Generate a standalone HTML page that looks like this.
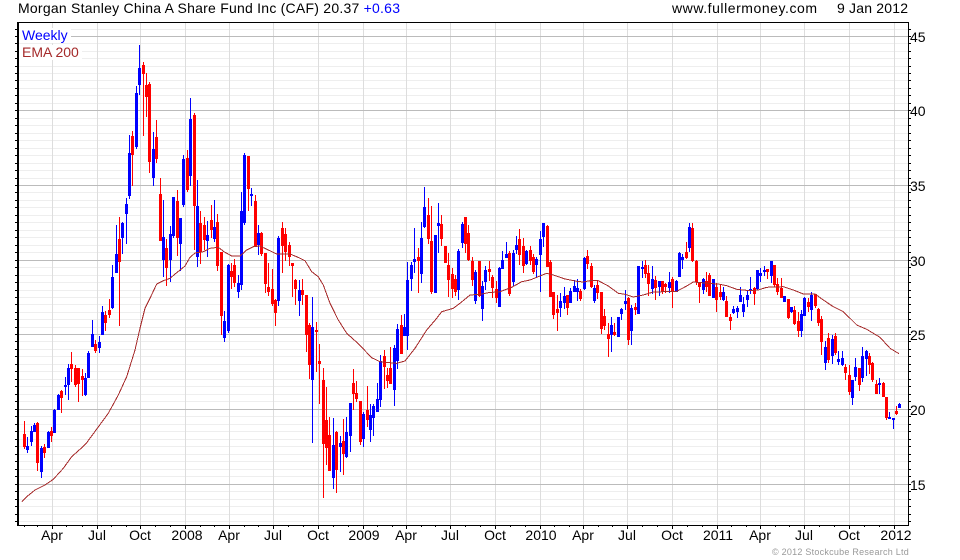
<!DOCTYPE html>
<html><head><meta charset="utf-8"><style>
html,body{margin:0;padding:0;background:#fff}
svg{display:block}
text{font-family:"Liberation Sans",Arial,sans-serif;font-size:14px;fill:#000}
.x{text-anchor:middle}
</style></head><body>
<svg width="960" height="560" viewBox="0 0 960 560" xmlns="http://www.w3.org/2000/svg">
<rect width="960" height="560" fill="#fff"/>
<g shape-rendering="crispEdges" fill="none">
<path stroke="#eee" d="M19 29.5h889M19 43.5h889M19 51.5h889M19 58.5h889M19 66.5h889M19 73.5h889M19 80.5h889M19 88.5h889M19 95.5h889M19 103.5h889M19 118.5h889M19 125.5h889M19 133.5h889M19 140.5h889M19 148.5h889M19 155.5h889M19 163.5h889M19 170.5h889M19 178.5h889M19 192.5h889M19 200.5h889M19 207.5h889M19 215.5h889M19 222.5h889M19 230.5h889M19 237.5h889M19 245.5h889M19 252.5h889M19 267.5h889M19 275.5h889M19 282.5h889M19 290.5h889M19 297.5h889M19 304.5h889M19 312.5h889M19 319.5h889M19 327.5h889M19 341.5h889M19 349.5h889M19 356.5h889M19 364.5h889M19 371.5h889M19 379.5h889M19 386.5h889M19 394.5h889M19 401.5h889M19 416.5h889M19 424.5h889M19 431.5h889M19 439.5h889M19 446.5h889M19 454.5h889M19 461.5h889M19 469.5h889M19 476.5h889M19 491.5h889M19 499.5h889M19 506.5h889M19 514.5h889M19 521.5h889"/>
<path stroke="#ddd" d="M52.5 23V525M97.5 23V525M140.5 23V525M185.5 23V525M229.5 23V525M273.5 23V525M318.5 23V525M363.5 23V525M406.5 23V525M450.5 23V525M495.5 23V525M540.5 23V525M583.5 23V525M627.5 23V525M672.5 23V525M717.5 23V525M760.5 23V525M804.5 23V525M849.5 23V525M894.5 23V525"/>
<path stroke="#bbb" d="M19 36.5h889M19 110.5h889M19 185.5h889M19 260.5h889M19 334.5h889M19 409.5h889M19 484.5h889"/>
<rect x="19" y="28" width="52" height="15" fill="#fff"/>
<rect x="19" y="45" width="63" height="15" fill="#fff"/>
<g stroke="#000">
<path d="M18 22.5H908.5V525.5H18"/>
<path stroke-width="2" d="M18 22V526"/>
<path id="t" d="M15 29.5h2M15 36.5h2M15 43.5h2M15 51.5h2M15 58.5h2M15 66.5h2M15 73.5h2M15 80.5h2M15 88.5h2M15 95.5h2M15 103.5h2M15 110.5h2M15 118.5h2M15 125.5h2M15 133.5h2M15 140.5h2M15 148.5h2M15 155.5h2M15 163.5h2M15 170.5h2M15 178.5h2M15 185.5h2M15 192.5h2M15 200.5h2M15 207.5h2M15 215.5h2M15 222.5h2M15 230.5h2M15 237.5h2M15 245.5h2M15 252.5h2M15 260.5h2M15 267.5h2M15 275.5h2M15 282.5h2M15 290.5h2M15 297.5h2M15 304.5h2M15 312.5h2M15 319.5h2M15 327.5h2M15 334.5h2M15 341.5h2M15 349.5h2M15 356.5h2M15 364.5h2M15 371.5h2M15 379.5h2M15 386.5h2M15 394.5h2M15 401.5h2M15 409.5h2M15 416.5h2M15 424.5h2M15 431.5h2M15 439.5h2M15 446.5h2M15 454.5h2M15 461.5h2M15 469.5h2M15 476.5h2M15 484.5h2M15 491.5h2M15 499.5h2M15 506.5h2M15 514.5h2M15 521.5h2"/>
<use href="#t" x="894"/>
<path d="M24.5 526v1M37.5 526v1M52.5 526v3M66.5 526v1M82.5 526v1M97.5 526v3M111.5 526v1M126.5 526v1M140.5 526v3M155.5 526v1M170.5 526v1M185.5 526v3M200.5 526v1M214.5 526v1M229.5 526v3M244.5 526v1M258.5 526v1M273.5 526v3M288.5 526v1M303.5 526v1M318.5 526v3M333.5 526v1M348.5 526v1M363.5 526v3M377.5 526v1M392.5 526v1M406.5 526v3M421.5 526v1M435.5 526v1M450.5 526v3M465.5 526v1M480.5 526v1M495.5 526v3M510.5 526v1M525.5 526v1M540.5 526v3M554.5 526v1M569.5 526v1M583.5 526v3M598.5 526v1M612.5 526v1M627.5 526v3M642.5 526v1M657.5 526v1M672.5 526v3M687.5 526v1M702.5 526v1M717.5 526v3M731.5 526v1M746.5 526v1M760.5 526v3M775.5 526v1M789.5 526v1M804.5 526v3M819.5 526v1M834.5 526v1M849.5 526v3M864.5 526v1M879.5 526v1M894.5 526v3"/>
</g>
<g stroke="#00f">
<path d="M27.5 437V453M31.5 426V446M34.5 423V432M41.5 446V478M48.5 431V448M54.5 409V433M58.5 394V410M65.5 377V395M68.5 364V400M85.5 373V396M88.5 351V378M92.5 320V347M99.5 336V353M102.5 306V335M112.5 265V309M116.5 225V273M122.5 222V254M126.5 198V244M129.5 135V199M136.5 86V149M139.5 45V95M153.5 132V186M163.5 200V277M170.5 226V282M173.5 197V238M180.5 218V271M183.5 155V207M190.5 98V186M197.5 180V267M207.5 221V257M214.5 200V242M224.5 311V342M228.5 264V333M238.5 275V298M241.5 192V290M244.5 153V225M251.5 188V206M258.5 225V255M278.5 236V306M299.5 280V316M312.5 297V443M333.5 418V489M340.5 436V472M346.5 417V458M350.5 403V452M363.5 412V447M370.5 404V442M373.5 404V436M377.5 383V412M380.5 355V407M394.5 345V406M397.5 324V369M404.5 314V336M407.5 262V350M411.5 262V291M414.5 228V273M421.5 222V283M424.5 187V228M435.5 235V293M438.5 203V253M458.5 249V300M462.5 222V248M475.5 270V304M482.5 281V321M485.5 266V290M499.5 267V307M502.5 251V269M506.5 242V258M513.5 250V286M516.5 236V254M526.5 250V265M536.5 257V278M540.5 231V292M543.5 223V247M560.5 293V317M564.5 287V309M570.5 288V303M574.5 280V292M577.5 279V301M584.5 257V290M594.5 285V303M611.5 317V352M618.5 317V337M621.5 308V320M625.5 290V310M631.5 305V345M638.5 266V314M642.5 261V278M652.5 266V294M659.5 281V296M669.5 272V293M676.5 280V292M679.5 252V277M682.5 254V269M689.5 223V252M703.5 278V294M713.5 279V298M723.5 287V301M733.5 306V314M737.5 306V318M740.5 287V302M743.5 297V317M747.5 290V307M750.5 277V294M757.5 270V290M760.5 268V282M764.5 266V276M771.5 261V283M784.5 296V302M791.5 307V313M801.5 310V337M804.5 297V316M811.5 292V321M825.5 341V370M832.5 335V364M838.5 351V365M842.5 351V366M852.5 380V405M855.5 358V381M862.5 347V382M866.5 350V376M879.5 378V394M889.5 412V419M893.5 418V429M899.5 403V408"/>
<path stroke-width="3" d="M27.5 446V450M31.5 431V442M34.5 425V432M41.5 448V472M48.5 432V448M54.5 410V433M58.5 395V410M65.5 385V387M68.5 368V385M85.5 378V395M88.5 353V378M92.5 334V347M99.5 342V348M102.5 312V335M112.5 277V308M116.5 254V273M122.5 223V238M126.5 204V214M129.5 153V196M136.5 93V147M139.5 68V85M153.5 149V178M163.5 237V260M170.5 234V260M173.5 197V236M180.5 218V244M183.5 159V205M190.5 119V176M197.5 206V257M207.5 235V241M214.5 227V239M224.5 321V338M228.5 265V331M238.5 283V292M241.5 211V285M244.5 155V223M251.5 194V196M258.5 233V245M278.5 238V301M299.5 290V301M312.5 327V380M333.5 445V478M340.5 443V447M346.5 432V457M350.5 403V436M363.5 414V439M370.5 415V430M373.5 406V418M377.5 399V412M380.5 361V400M394.5 348V390M397.5 329V361M404.5 327V336M407.5 280V336M411.5 265V279M414.5 259V262M421.5 238V274M424.5 207V227M435.5 235V293M438.5 223V226M458.5 251V290M462.5 224V243M475.5 272V301M482.5 286V309M485.5 270V282M499.5 268V307M502.5 260V269M506.5 254V258M513.5 253V282M516.5 245V250M526.5 251V264M536.5 259V265M540.5 239V255M543.5 223V237M560.5 301V308M564.5 296V303M570.5 291V303M574.5 286V292M577.5 288V292M584.5 258V289M594.5 288V301M611.5 325V335M618.5 317V337M621.5 309V314M625.5 301V304M631.5 308V331M638.5 266V314M642.5 267V269M652.5 279V289M659.5 281V287M669.5 282V288M676.5 281V292M679.5 253V277M682.5 257V260M689.5 227V248M703.5 279V290M713.5 279V298M723.5 292V300M733.5 309V313M737.5 308V312M740.5 295V302M743.5 304V312M747.5 295V300M750.5 289V290M757.5 270V289M760.5 273V276M764.5 270V272M771.5 261V276M784.5 296V302M791.5 307V312M801.5 314V331M804.5 298V316M811.5 295V310M825.5 347V363M832.5 339V356M838.5 359V362M842.5 358V365M852.5 380V398M855.5 367V377M862.5 356V378M866.5 351V359M879.5 383V385M889.5 417V419M893.5 418V420M899.5 404V408"/>
</g>
<g stroke="#f00">
<path d="M24.5 421V449M37.5 422V471M44.5 444V458M51.5 427V442M61.5 390V413M71.5 352V382M75.5 365V387M78.5 368V402M82.5 369V396M95.5 340V353M105.5 311V331M109.5 299V318M119.5 217V326M132.5 131V186M143.5 62V136M146.5 73V117M149.5 82V173M156.5 120V163M160.5 178V241M166.5 239V286M177.5 190V256M187.5 150V192M194.5 113V250M200.5 211V264M204.5 217V250M211.5 205V238M217.5 214V271M221.5 252V335M231.5 263V289M234.5 259V287M248.5 156V211M255.5 195V247M261.5 232V256M265.5 253V293M268.5 263V296M272.5 269V306M275.5 299V326M282.5 222V273M285.5 228V261M289.5 242V266M292.5 263V297M295.5 279V305M302.5 279V305M306.5 295V352M309.5 323V379M316.5 322V372M319.5 344V404M323.5 368V498M326.5 387V465M329.5 417V471M336.5 431V493M343.5 419V475M353.5 369V410M356.5 381V402M360.5 401V445M367.5 386V427M384.5 350V389M387.5 368V388M390.5 347V384M401.5 315V354M418.5 248V293M428.5 198V244M431.5 206V294M441.5 215V246M445.5 246V263M448.5 253V297M452.5 268V298M455.5 275V296M465.5 217V253M468.5 225V261M472.5 257V286M479.5 261V297M489.5 261V281M492.5 275V298M496.5 281V303M509.5 251V296M519.5 229V265M523.5 238V273M530.5 246V265M533.5 254V274M547.5 225V267M550.5 260V297M553.5 292V319M557.5 295V331M567.5 295V315M580.5 289V301M587.5 250V269M591.5 263V288M597.5 281V299M601.5 292V334M604.5 309V330M608.5 323V357M614.5 323V336M628.5 297V345M635.5 303V315M645.5 260V278M648.5 265V296M655.5 276V300M662.5 281V294M665.5 283V293M672.5 277V308M686.5 242V259M692.5 223V262M696.5 260V285M699.5 282V303M706.5 272V292M709.5 273V296M716.5 283V312M720.5 285V300M726.5 296V317M730.5 314V330M754.5 287V305M767.5 269V279M774.5 265V287M777.5 278V295M781.5 278V298M788.5 299V319M794.5 306V325M798.5 312V337M808.5 298V312M815.5 294V308M818.5 308V326M821.5 316V355M828.5 333V363M835.5 333V355M845.5 364V380M849.5 365V395M859.5 368V391M869.5 353V374M872.5 362V382M876.5 380V394M883.5 382V397M886.5 397V420M896.5 406V415"/>
<path stroke-width="3" d="M24.5 434V447M37.5 423V463M44.5 447V453M51.5 431V436M61.5 391V398M71.5 364V369M75.5 368V385M78.5 368V384M82.5 376V380M95.5 344V351M105.5 315V323M109.5 310V315M119.5 239V262M132.5 136V155M143.5 65V74M146.5 85V97M149.5 84V162M156.5 137V159M160.5 194V241M166.5 248V268M177.5 201V238M187.5 158V190M194.5 115V206M200.5 223V252M204.5 225V240M211.5 220V230M217.5 222V266M221.5 252V316M231.5 271V277M234.5 265V283M248.5 156V189M255.5 201V246M261.5 233V254M265.5 253V284M268.5 287V292M272.5 289V304M275.5 300V313M282.5 228V246M285.5 234V252M289.5 245V257M292.5 263V266M295.5 280V289M302.5 290V295M306.5 295V335M309.5 325V365M316.5 330V332M319.5 361V364M323.5 380V444M326.5 420V448M329.5 435V471M336.5 432V470M343.5 441V454M353.5 383V394M356.5 393V399M360.5 401V442M367.5 410V420M384.5 356V367M387.5 375V381M390.5 368V384M401.5 325V354M418.5 257V261M428.5 215V239M431.5 241V292M441.5 224V239M445.5 246V263M448.5 265V280M452.5 274V289M455.5 279V292M465.5 217V244M468.5 233V260M472.5 261V280M479.5 261V296M489.5 269V272M492.5 277V288M496.5 289V298M509.5 253V294M519.5 239V255M523.5 246V266M530.5 250V261M533.5 257V272M547.5 226V267M550.5 262V297M553.5 292V315M557.5 309V313M567.5 295V308M580.5 291V299M587.5 256V264M591.5 266V287M597.5 285V293M601.5 292V329M604.5 316V326M608.5 334V339M614.5 332V335M628.5 298V340M635.5 307V310M645.5 265V274M648.5 273V284M655.5 280V288M662.5 281V292M665.5 284V287M672.5 279V292M686.5 252V258M692.5 228V261M696.5 261V282M699.5 282V287M706.5 281V287M709.5 275V296M716.5 287V300M720.5 292V297M726.5 301V317M730.5 317V321M754.5 288V294M767.5 269V272M774.5 265V285M777.5 284V292M781.5 288V298M788.5 299V318M794.5 310V324M798.5 321V331M808.5 302V307M815.5 294V306M818.5 309V323M821.5 319V342M828.5 338V360M835.5 336V353M845.5 367V373M849.5 375V392M859.5 368V385M869.5 356V365M872.5 363V380M876.5 384V394M883.5 383V397M886.5 397V418M896.5 411V414"/>
</g>
<path stroke="#a52a2a" stroke-width="1" d="M21.7 501.7L26.7 496.7L35 490L45 485L53.3 479.3L63.3 468.3L71.7 456.7L80 449.3L86.7 442.7L97.3 428.3L108.3 413.3L118.3 395L126.7 376.7L135 350L140 328.3L145 308.3L150 298.3L156.7 284L163.3 280.7L170 278.3L176.7 272.7L185 266L190 257.3L195 253L203.3 251.7L210 248.3L218.3 247.3L224 251.7L231.7 256L240 256L246.7 250L253.3 246.7L260 246L268.3 250L276.7 254L290 254L296.7 256.7L305 260.7L311.7 271.7L318.3 276.7L323.3 285L330 303.3L338.3 320L346.7 333.3L355 340.7L365 350.7L371.7 357.7L380 361.7L396.7 363.3L405 361L415 348.3L426.7 330L436.7 318.3L441.7 311.7L453.3 308.3L460 303.3L470 295L480 294.3L488.3 292.7L500 291.7L511.7 287.3L521.7 281.7L530 280L540 276L546.7 273.3L553.3 275L565 279L576.7 281.3L583.3 282L590 280.7L598.3 280.7L608.3 286L618.3 293.3L625 294.3L633.3 297L643.3 295L653.3 292L676.7 291.3L686.7 286L693.3 282L720 284.3L726.7 285.7L736.7 289.3L750 290.7L758.3 290L766.7 287.3L783.3 286.7L793.3 290L803.3 294L815 294L823.3 300L833.3 306.7L843.3 311.7L850 318.3L856.7 325L866.7 329.3L880 337.3L890 348.3L899 353.7"/>
</g>
<text x="18" y="13" textLength="382" lengthAdjust="spacing">Morgan Stanley China A Share Fund Inc (CAF) 20.37 <tspan style="fill:#00f">+0.63</tspan></text>
<text x="672" y="13" textLength="145" lengthAdjust="spacing">www.fullermoney.com</text>
<text x="837" y="13" textLength="71" lengthAdjust="spacing">9 Jan 2012</text>
<text x="22" y="40" style="fill:#00f">Weekly</text>
<text x="22" y="57" style="fill:#a52a2a">EMA 200</text>
<text x="910" y="42">45</text><text x="910" y="116">40</text><text x="910" y="191">35</text><text x="910" y="266">30</text><text x="910" y="340">25</text><text x="910" y="415">20</text><text x="910" y="490">15</text>
<text class="x" x="52" y="540">Apr</text><text class="x" x="97" y="540">Jul</text><text class="x" x="140" y="540">Oct</text><text class="x" x="187" y="540">2008</text><text class="x" x="229" y="540">Apr</text><text class="x" x="273" y="540">Jul</text><text class="x" x="318" y="540">Oct</text><text class="x" x="364" y="540">2009</text><text class="x" x="406" y="540">Apr</text><text class="x" x="450" y="540">Jul</text><text class="x" x="495" y="540">Oct</text><text class="x" x="541" y="540">2010</text><text class="x" x="583" y="540">Apr</text><text class="x" x="627" y="540">Jul</text><text class="x" x="672" y="540">Oct</text><text class="x" x="718" y="540">2011</text><text class="x" x="760" y="540">Apr</text><text class="x" x="804" y="540">Jul</text><text class="x" x="849" y="540">Oct</text><text class="x" x="896" y="540">2012</text>
<text x="772" y="555" style="font-size:9px;fill:#999;letter-spacing:.25px">© 2012 Stockcube Research Ltd</text>
</svg>
</body></html>
